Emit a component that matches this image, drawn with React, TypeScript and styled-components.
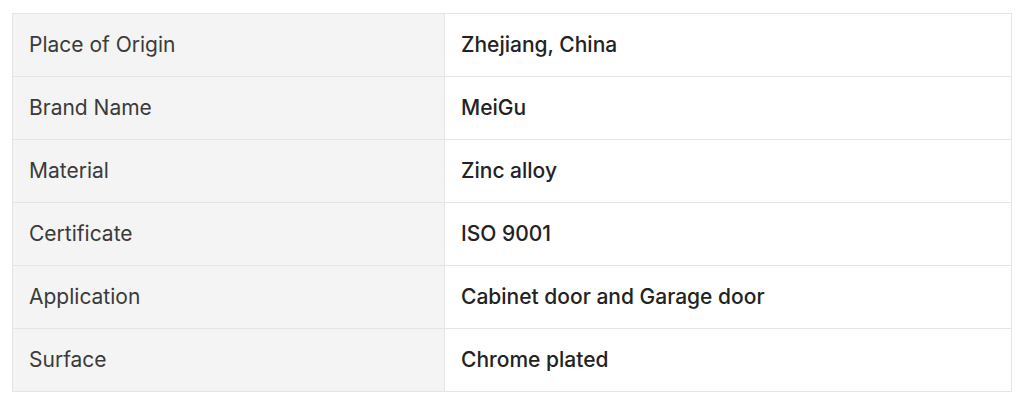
import React from "react";
import styled, { createGlobalStyle } from "styled-components";

const Global = createGlobalStyle`
  html, body { margin: 0; padding: 0; background: #ffffff; }
  body { font-family: Inter, "Noto Sans", sans-serif; }
`;

const Wrap = styled.div`
  padding: 13px 12px 0 12px;
`;

const Table = styled.table`
  width: 1000px;
  border-collapse: collapse;
  table-layout: fixed;
  border: 1px solid #e4e4e4;
`;

const Row = styled.tr`
  height: 63px;
`;

const Cell = styled.td<{ $head?: boolean }>`
  box-sizing: border-box;
  border: 1px solid #e4e4e4;
  padding: 0 16px;
  font-size: 21px;
  line-height: 24px;
  vertical-align: middle;
  background: ${(p) => (p.$head ? "#f4f4f4" : "#ffffff")};
  color: ${(p) => (p.$head ? "#3a3a3a" : "#222222")};
  font-weight: ${(p) => (p.$head ? 400 : 500)};
  width: ${(p) => (p.$head ? "432px" : "auto")};
`;

const rows: [string, string][] = [
  ["Place of Origin", "Zhejiang, China"],
  ["Brand Name", "MeiGu"],
  ["Material", "Zinc alloy"],
  ["Certificate", "ISO 9001"],
  ["Application", "Cabinet door and Garage door"],
  ["Surface", "Chrome plated"],
];

export default function App() {
  return (
    <>
      <Global />
      <Wrap>
        <Table>
          <tbody>
            {rows.map(([k, v]) => (
              <Row key={k}>
                <Cell $head>{k}</Cell>
                <Cell>{v}</Cell>
              </Row>
            ))}
          </tbody>
        </Table>
      </Wrap>
    </>
  );
}
